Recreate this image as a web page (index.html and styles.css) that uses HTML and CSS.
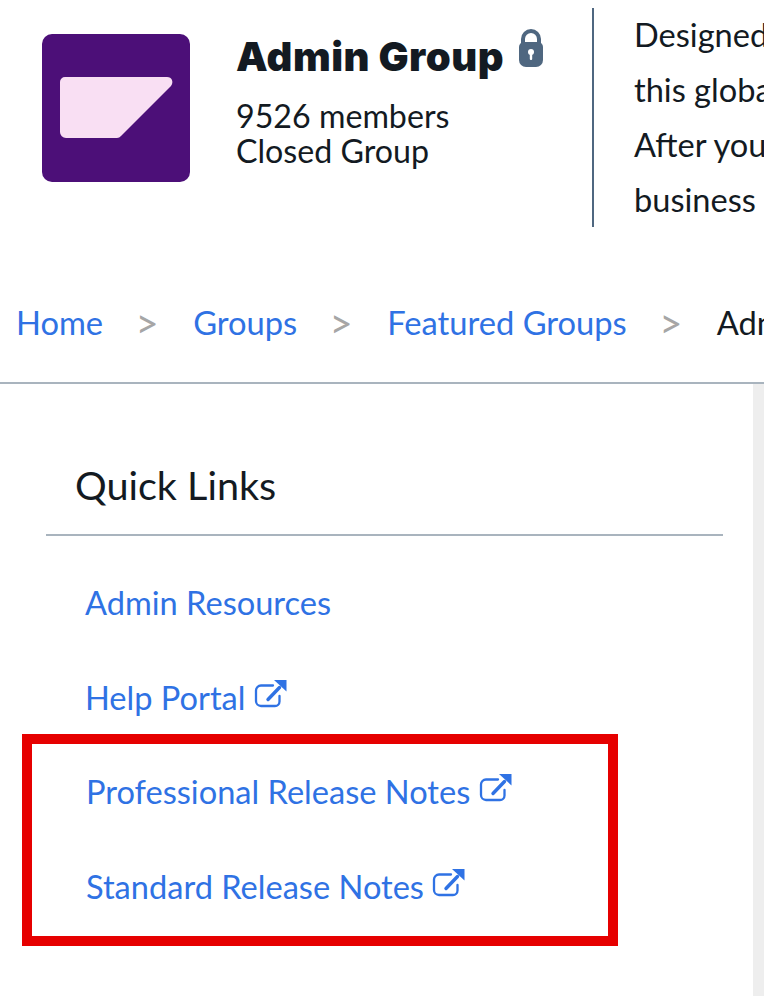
FILE: index.html
```html
<!DOCTYPE html>
<html lang="en">

<head>
  <meta charset="UTF-8">
  <title>Admin Group</title>
  <link rel="stylesheet" href="styles.css">
</head>

<body>
  <svg class="icon-defs" width="0" height="0">
    <symbol id="ext" viewBox="0 0 33 29">
      <path d="M19 6.5H7a5 5 0 0 0-5 5V22a5 5 0 0 0 5 5h14a4.500 4.500 0 0 0 4.500-4.500V17" fill="none" stroke="currentColor" stroke-width="2.300" stroke-linecap="round"/>
      <path d="M14 20.500L25.500 8.500" fill="none" stroke="currentColor" stroke-width="3.400" stroke-linecap="round"/>
      <path d="M20 1h12.500v11.500z" fill="currentColor"/>
    </symbol>
  </svg>

  <div class="group-header">
    <svg class="group-logo" viewBox="0 0 148 148">
      <rect width="148" height="148" rx="10" fill="#4c0f78"/>
      <path d="M18 48a5 5 0 0 1 5-5h102c5 0 7 5 4 9l-50 50a6 6 0 0 1-4 2H24a6 6 0 0 1-6-6z" fill="#f9dff3"/>
    </svg>
    <div class="group-info">
      <h1>Admin Group
        <svg class="lock" viewBox="0 0 26 40">
          <path d="M5 17V11a8 8 0 0 1 16 0v6" fill="none" stroke="#4f6780" stroke-width="4"/>
          <path d="M1 19a5 5 0 0 1 5-5h14a5 5 0 0 1 5 5v13a7 7 0 0 1-7 7H8a7 7 0 0 1-7-7z" fill="#4f6780"/>
          <circle cx="13" cy="24" r="3" fill="#fff"/>
          <rect x="11.800" y="24" width="2.400" height="8" rx="1" fill="#fff"/>
        </svg>
      </h1>
      <p>9526 members<br>Closed Group</p>
    </div>
    <div class="group-desc">
      <p>Designed for administrators of SAP</p>
      <p>this global community gives you access</p>
      <p>After you join you can connect with</p>
      <p>business users and product experts</p>
    </div>
  </div>

  <nav class="breadcrumb">
    <a href="#">Home</a><span class="sep">&gt;</span>
    <a href="#">Groups</a><span class="sep">&gt;</span>
    <a href="#">Featured Groups</a><span class="sep">&gt;</span>
    <span class="current">Admin Group</span>
  </nav>

  <div class="content">
    <div class="quick-links">
      <h2>Quick Links</h2>
      <ul class="links">
        <li><a href="#">Admin Resources</a></li>
        <li><a href="#">Help Portal <svg class="ext"><use href="#ext"/></svg></a></li>
      </ul>
      <!-- recuadro rojo -->
      <ul class="links highlight">
        <li><a href="#">Professional Release Notes <svg class="ext"><use href="#ext"/></svg></a></li>
        <li><a href="#">Standard Release Notes <svg class="ext"><use href="#ext"/></svg></a></li>
      </ul>
    </div>
    <div class="scroll-track"></div>
  </div>
</body>

</html>
```

FILE: styles.css
```css
html,
body {
  height: 100%;
}

body {
  margin: 0;
  overflow: hidden;
  display: flex;
  flex-direction: column;
  font-family: Lato, "Open Sans", sans-serif;
  color: #131a22;
  background: #fff;
}

a {
  color: #2f72e4;
  text-decoration: none;
}

.icon-defs {
  position: absolute;
}

.group-header {
  display: flex;
  height: 219px;
  margin-top: 8px;
  padding-left: 42px;
  flex: none;
}

.group-logo {
  width: 148px;
  height: 148px;
  margin-top: 26px;
  margin-right: 46px;
  flex: none;
}

.group-info {
  width: 356px;
  flex: none;
}

.group-info h1 {
  margin: 20px 0 0;
  font-family: Inter, sans-serif;
  font-size: 40px;
  line-height: 52px;
  font-weight: 900;
  letter-spacing: 0.5px;
  white-space: nowrap;
}

.lock {
  width: 26px;
  height: 40px;
  margin-left: 6px;
  vertical-align: 3px;
}

.group-info p {
  margin: 15px 0 0;
  font-size: 32.2px;
  line-height: 35px;
}

.group-desc {
  border-left: 2px solid #4f6780;
  padding-left: 40px;
  white-space: nowrap;
  overflow: hidden;
  flex: 1;
}

.group-desc p {
  margin: 0;
  font-size: 32.6px;
  line-height: 55px;
  position: relative;
  top: -1px;
}

.breadcrumb {
  display: flex;
  align-items: center;
  height: 119px;
  padding: 36px 0 0 16px;
  border-bottom: 2px solid #a9b4be;
  font-size: 32.7px;
  white-space: nowrap;
  overflow: hidden;
  flex: none;
}

.sep {
  margin: 0 34.4px 0 32.4px;
  color: #a6a6a6;
  font-size: 40px;
  line-height: 1;
}

.content {
  display: flex;
  flex: 1;
}

.quick-links {
  flex: 1;
  padding: 0 30px 0 46px;
}

.quick-links h2 {
  margin: 76px 0 0;
  padding: 0 0 24px 29px;
  border-bottom: 2px solid #a9b4be;
  font-size: 39.6px;
  line-height: 50px;
  font-weight: 400;
}

.links {
  list-style: none;
  margin: 19px 0 0;
  padding: 0 0 0 39px;
  font-size: 32.6px;
  line-height: 95px;
}

.links.highlight {
  width: 596px;
  height: 212px;
  box-sizing: border-box;
  margin: -11px 0 0 -24px;
  padding: 0 0 0 54px;
  border: 10px solid #e60000;
}

.ext {
  width: 33px;
  height: 29px;
  vertical-align: 2px;
}

.scroll-track {
  width: 11px;
  background: #eeeeee;
  flex: none;
}
```
